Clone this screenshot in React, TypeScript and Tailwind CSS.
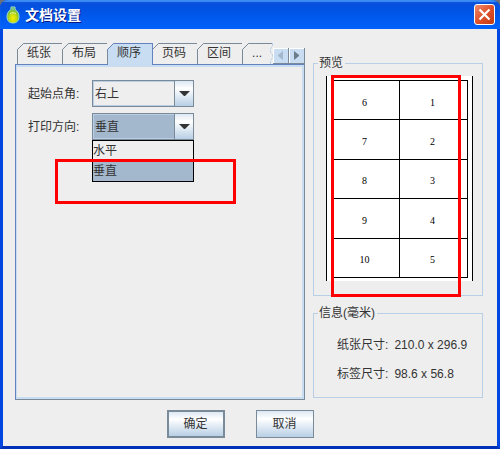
import React, { useState } from 'react';

const tabs = ['纸张', '布局', '顺序', '页码', '区间'];

const previewRows = [
  [6, 1],
  [7, 2],
  [8, 3],
  [9, 4],
  [10, 5]
];

const sizes = [
  { label: '纸张尺寸:', value: '210.0 x 296.9' },
  { label: '标签尺寸:', value: '98.6 x 56.8' }
];

const AppIcon = () => (
  <svg width="14" height="18" viewBox="0 0 14 18" aria-hidden="true">
    <defs>
      <radialGradient id="drop" cx="0.5" cy="0.7" r="0.65">
        <stop offset="0" stopColor="#f6ee00" />
        <stop offset="0.45" stopColor="#c4dc10" />
        <stop offset="1" stopColor="#3aa648" />
      </radialGradient>
    </defs>
    <path
      d="M5 1h4v2.500c2.500 1.500 4 4 4 7 0 4-2 6.500-6 6.500s-6-2.500-6-6.500c0-3 1.500-5.500 4-7z"
      fill="url(#drop)"
      stroke="#a9dccb"
    />
    <path d="M5.500 1.500h3v3h-3z" fill="#7cc486" />
    <path d="M4 7.500c1.500-1 4.500-1 6 0" fill="none" stroke="#d9f0b0" />
  </svg>
);

const TabCorner = ({ color }: { color: string }) => (
  <svg className="absolute -top-px -left-px" width="8" height="8" viewBox="0 0 8 8" aria-hidden="true">
    <path d="M0 0h7L0 7z" fill="#eeeeee" />
    <path d="M0.500 8V6.500L6.500 0.500H8" fill="none" stroke={color} />
  </svg>
);

interface TabProps {
  label: string;
  selected: boolean;
  first: boolean;
  onSelect: () => void;
}

const Tab = ({ label, selected, first, onSelect }: TabProps) => (
  <button
    role="tab"
    aria-selected={selected}
    onClick={onSelect}
    className={`relative shrink-0 border-t border-r pr-[11px] pl-[9px] leading-4 whitespace-nowrap ${
      selected ? 'z-10 -mb-px h-[22px] border-[#6382bf] bg-[#c8ddf2] pb-[3px]' : 'h-[21px] border-[#7a8a99] pb-0.5'
    } ${first ? 'border-l' : ''}`}
  >
    <TabCorner color={selected ? '#6382bf' : '#7a8a99'} />
    {label}
  </button>
);

interface ComboProps {
  id: string;
  label: string;
  options: string[];
  value: string;
  active?: boolean;
  onChange: (value: string) => void;
}

const Combo = ({ id, label, options, value, active, onChange }: ComboProps) => (
  <div className="flex items-center">
    <label htmlFor={id} className="w-16">
      {label}
    </label>
    <div className="relative flex h-[27px] w-[102px] border border-[#7a8a99]">
      <select
        id={id}
        value={value}
        onChange={(e) => onChange(e.target.value)}
        className={`w-full appearance-none border border-[#b8cfe5] pr-5 pl-px outline-none ${
          active ? 'bg-[#a3b8cc]' : 'bg-[#eeeeee]'
        }`}
      >
        {options.map((option) => (
          <option key={option}>{option}</option>
        ))}
      </select>
      <span className="pointer-events-none absolute inset-y-0 right-0 flex w-[19px] items-center justify-center border-l border-[#7a8a99] bg-linear-to-b from-[#dde8f3] via-white via-30% to-[#b8cfe5]">
        <svg width="11" height="6" viewBox="0 0 11 6" aria-hidden="true">
          <path d="M0 0h11L6 5H5z" fill="#333333" />
        </svg>
      </span>
      {active && (
        <ul role="listbox" aria-label={label} className="absolute top-[26px] -right-px -left-px border border-black bg-[#eeeeee]">
          {options.map((option) => (
            <li
              key={option}
              role="option"
              aria-selected={option === value}
              onClick={() => onChange(option)}
              className={`h-5 leading-5 ${option === value ? 'bg-[#a3b8cc]' : ''}`}
            >
              {option}
            </li>
          ))}
        </ul>
      )}
    </div>
  </div>
);

const App = () => {
  const [tab, setTab] = useState('顺序');
  const [corner, setCorner] = useState('右上');
  const [direction, setDirection] = useState('垂直');

  return (
    <div className="bg-[#6d7078]">
      <div className="flex min-h-screen flex-col overflow-hidden rounded-t-lg bg-[#0046e0] font-['Liberation_Sans','Noto_Sans_CJK_SC',sans-serif] text-xs text-[#333333]">
        <header className="flex h-[29px] items-center justify-between bg-linear-to-b from-[#0a4fd8] via-[#0054e6] via-40% to-[#0262fb] pr-[5px] pl-1.5 shadow-[inset_0_2px_1px_#3c8cf5]">
          <div className="flex items-center gap-[5px]">
            <AppIcon />
            <h1 className="text-sm font-bold text-white [text-shadow:1px_1px_0_#0a1883]">文档设置</h1>
          </div>
          <button
            aria-label="关闭"
            className="flex h-[21px] w-[21px] items-center justify-center rounded-[3px] border border-white bg-linear-to-br from-[#ee8a6c] via-[#e0512a] to-[#c23a12]"
          >
            <svg width="13" height="13" viewBox="0 0 13 13" aria-hidden="true">
              <path d="M1.500 1.500l10 10M11.500 1.500l-10 10" stroke="white" strokeWidth="2.200" />
            </svg>
          </button>
        </header>

        <div className="flex flex-1 flex-col border-x-3 border-b-3 border-x-[#0046e0] border-b-[#0030b8] bg-[#eeeeee] pb-2">
          <main className="flex flex-1 gap-2 pt-3.5 pr-3.5 pb-2.5 pl-3">
            <section className="flex flex-1 flex-col">
              <div role="tablist" className="flex items-start pl-0.5">
                {tabs.map((name, index) => (
                  <Tab key={name} label={name} first={index === 0} selected={name === tab} onSelect={() => setTab(name)} />
                ))}
                <button className="relative h-[21px] w-[30px] shrink-0 border-t border-[#7a8a99] pb-0.5 pl-[9px] text-left leading-4">
                  <TabCorner color="#7a8a99" />
                  ...
                  <svg className="absolute -top-px right-0" width="4" height="21" viewBox="0 0 4 21" aria-hidden="true">
                    <path d="M3.500 0v3l-2 3v3l2 3v3l-2 3v3" fill="none" stroke="#b8cfe5" strokeDasharray="3 1" />
                  </svg>
                </button>
                <div className="mt-[5px] ml-auto flex h-4 shrink-0">
                  <button
                    aria-label="向左滚动"
                    className="flex w-4 items-center justify-center border-r border-b border-[#7a8a99] bg-[#c8ddf2] shadow-[inset_1px_1px_0_white]"
                  >
                    <svg width="5" height="9" viewBox="0 0 5 9" aria-hidden="true">
                      <path d="M5 0v9L0 5V4z" fill="#a3b8cc" />
                    </svg>
                  </button>
                  <button
                    aria-label="向右滚动"
                    className="flex w-4 items-center justify-center border-r border-b border-[#7a8a99] bg-[#c8ddf2] shadow-[inset_1px_1px_0_white]"
                  >
                    <svg width="5" height="9" viewBox="0 0 5 9" aria-hidden="true">
                      <path d="M0 0v9l5-4V4z" fill="#6b7c8c" />
                    </svg>
                  </button>
                </div>
              </div>

              <div role="tabpanel" className="flex flex-1 border border-t-[#6382bf] border-r-[#7a8a99] border-b-[#7a8a99] border-l-[#6382bf]">
                <div className="relative flex-1 border-t-2 border-r-2 border-b-2 border-l border-[#c8ddf2] pt-[13px] pl-[11px]">
                  <div className="flex flex-col gap-1.5">
                    <Combo
                      id="corner"
                      label="起始点角:"
                      options={['左上', '右上', '左下', '右下']}
                      value={corner}
                      onChange={setCorner}
                    />
                    <Combo
                      id="direction"
                      label="打印方向:"
                      options={['水平', '垂直']}
                      value={direction}
                      active
                      onChange={setDirection}
                    />
                  </div>
                  <div className="pointer-events-none absolute top-[92px] left-[38px] h-[45px] w-[181px] border-3 border-[#ff0000]" />
                </div>
              </div>
            </section>

            <aside className="mt-3 flex w-[170px] flex-col gap-[9px] self-start">
              <fieldset className="border border-[#b8cfe5] pt-[5px] pr-[9px] pb-3.5 pl-3">
                <legend className="-ml-2 pr-0.5 pl-px leading-4">预览</legend>
                <div className="relative border-x border-black bg-white px-1 pt-1 pb-[3px]">
                  <table className="h-[198px] w-full table-fixed border-collapse text-center font-['Liberation_Serif',serif] text-[10px] text-black">
                    <tbody>
                      {previewRows.map((row) => (
                        <tr key={row[0]}>
                          {row.map((cell) => (
                            <td key={cell} className="border border-black pt-1 pr-0.5">
                              {cell}
                            </td>
                          ))}
                        </tr>
                      ))}
                    </tbody>
                  </table>
                  <div className="pointer-events-none absolute -top-px right-[11px] -bottom-4 left-1 border-3 border-[#ff0000]" />
                </div>
              </fieldset>

              <fieldset className="border border-[#b8cfe5] pt-4 pb-[15px] pl-[23px]">
                <legend className="-ml-[19px] pr-0.5 pl-px leading-4">信息(毫米)</legend>
                <dl className="flex flex-col gap-[13px] leading-4">
                  {sizes.map((size) => (
                    <div key={size.label} className="flex gap-1.5">
                      <dt>{size.label}</dt>
                      <dd>{size.value}</dd>
                    </div>
                  ))}
                </dl>
              </fieldset>
            </aside>
          </main>

          <footer className="flex justify-center gap-[31px] pr-5">
            <button className="h-7 w-[58px] border-2 border-[#7a8a99] bg-linear-to-b from-[#dde8f3] via-white via-30% to-[#b8cfe5]">
              确定
            </button>
            <button className="h-7 w-[58px] border border-[#7a8a99] bg-linear-to-b from-[#dde8f3] via-white via-30% to-[#b8cfe5]">
              取消
            </button>
          </footer>
        </div>
      </div>
    </div>
  );
};

export default App;
